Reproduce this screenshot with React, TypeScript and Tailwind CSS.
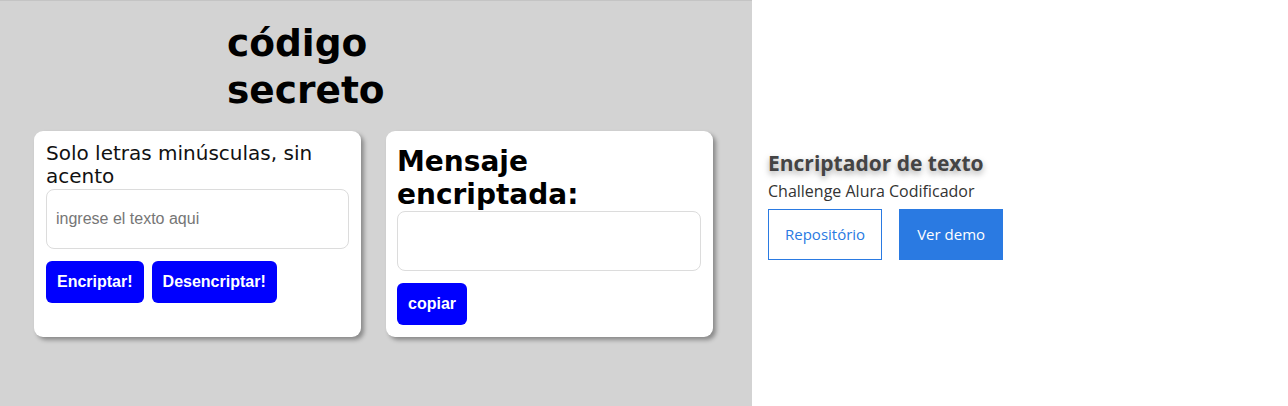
import { useState } from 'react';

export default function App() {
  const [texto, setTexto] = useState('');
  const [resultado, setResultado] = useState('');

  const encriptar = () =>
    setResultado(
      texto
        .replace(/e/g, 'enter')
        .replace(/i/g, 'imes')
        .replace(/a/g, 'ai')
        .replace(/o/g, 'ober')
        .replace(/u/g, 'ufat'),
    );

  const desencriptar = () =>
    setResultado(
      texto
        .replace(/enter/g, 'e')
        .replace(/imes/g, 'i')
        .replace(/ai/g, 'a')
        .replace(/ober/g, 'o')
        .replace(/ufat/g, 'u'),
    );

  const btn =
    'rounded-[6px] bg-[#0000ff] px-[11px] py-3 text-[16px] leading-[18px] font-bold text-white font-["Liberation_Sans",Arial,sans-serif]';

  return (
    <div className="flex h-[406px] w-full">
      <div className="h-full w-[752px] border-t border-[#c4c4c4] bg-[#d3d3d3] font-['DejaVu_Sans',Verdana,sans-serif] text-black">
        <h1 className="ml-[227px] mt-[19px] text-[37.5px] leading-[47px] font-bold">
          código
          <br />
          secreto
        </h1>

        <div className="ml-[34px] mt-[17px] flex items-stretch gap-[25px]">
          <section className="w-[327px] rounded-[9px] bg-white px-3 pt-[11px] pb-3 shadow-[3px_3px_4px_rgba(0,0,0,0.35)]">
            <p className="text-[20px] leading-[23.3px] text-[#111]">Solo letras minúsculas, sin acento</p>
            <input
              value={texto}
              onChange={(e) => setTexto(e.target.value)}
              placeholder="ingrese el texto aqui"
              className="h-[60px] w-full rounded-[8px] border border-[#dcdcdc] px-[9px] font-['Liberation_Sans',Arial,sans-serif] text-[16px] outline-none placeholder:text-[#767676]"
            />
            <div className="mt-3 flex gap-2">
              <button onClick={encriptar} className={btn}>
                Encriptar!
              </button>
              <button onClick={desencriptar} className={btn}>
                Desencriptar!
              </button>
            </div>
          </section>

          <section className="w-[327px] rounded-[9px] bg-white px-[11px] pt-[15px] pb-3 shadow-[3px_3px_4px_rgba(0,0,0,0.35)]">
            <h2 className="text-[28px] leading-[32.6px] font-bold">
              Mensaje
              <br />
              encriptada:
            </h2>
            <textarea
              readOnly
              value={resultado}
              className="block h-[60px] w-[304px] resize-none rounded-[8px] border border-[#dcdcdc] px-2 py-2 font-['Liberation_Sans',Arial,sans-serif] text-[16px] outline-none"
            />
            <button onClick={() => navigator.clipboard?.writeText(resultado)} className={`mt-3 ${btn}`}>
              copiar
            </button>
          </section>
        </div>
      </div>

      <div className="flex flex-1 items-center bg-white pl-4 font-['Open_Sans','Lato',sans-serif]">
        <div className="mt-[4px]">
          <h3 className="text-[21px] leading-[25px] font-bold text-[#444] [text-shadow:0_3px_6px_rgba(0,0,0,0.35)]">
            Encriptador de texto
          </h3>
          <p className="mt-[5px] text-[16px] leading-[20px] text-[#333]">Challenge Alura Codificador</p>
          <div className="mt-[8px] flex gap-[17px]">
            <a className="flex h-[51px] items-center border border-[#2a7ae2] px-4 text-[15px] text-[#2a7ae2]">Repositório</a>
            <a className="flex h-[51px] items-center bg-[#2a7ae2] px-[18px] text-[15px] text-white">Ver demo</a>
          </div>
        </div>
      </div>
    </div>
  );
}
